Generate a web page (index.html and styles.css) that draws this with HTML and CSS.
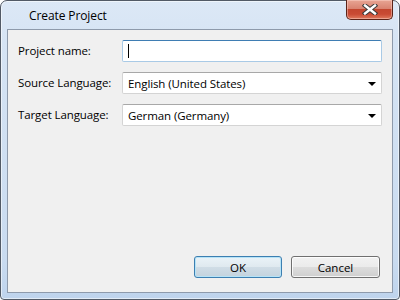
FILE: index.html
```html
<!DOCTYPE html>
<html>
<head>
<meta charset="utf-8">
<link rel="stylesheet" href="styles.css">
</head>
<body>
<div class="window">
  <div class="titlebar">
    <span class="title">Create Project</span>
    <button class="close" aria-label="Close">
      <svg width="16" height="11" viewBox="0 0 16 11">
        <path d="M3 1.5 L13 9.5 M13 1.5 L3 9.5" stroke="#3a3a3a" stroke-width="4.4" stroke-linecap="square" fill="none"/>
        <path d="M3 1.5 L13 9.5 M13 1.5 L3 9.5" stroke="#ffffff" stroke-width="2.4" stroke-linecap="square" fill="none"/>
      </svg>
    </button>
  </div>
  <div class="client">
    <div class="form">
      <label class="lbl">Project name:</label>
      <div class="input focused"><span class="caret"></span></div>
      <label class="lbl">Source Language:</label>
      <div class="combo"><span>English (United States)</span><span class="arrow"></span></div>
      <label class="lbl">Target Language:</label>
      <div class="combo"><span>German (Germany)</span><span class="arrow"></span></div>
    </div>
    <div class="buttons">
      <button class="btn default">OK</button>
      <button class="btn">Cancel</button>
    </div>
  </div>
</div>
</body>
</html>
```
FILE: styles.css
```css
* { box-sizing: border-box; }
html, body { margin: 0; padding: 0; }
body {
  width: 400px;
  height: 300px;
  font-family: "Segoe UI", "Open Sans", sans-serif;
  font-size: 11.5px;
  letter-spacing: -0.1px;
  color: #000;
  background: #ffffff;
}
.window {
  width: 400px;
  height: 300px;
  border: 1px solid #525a66;
  border-radius: 7px 7px 4px 4px;
  background: linear-gradient(to bottom, #dce8f6 0px, #d6e4f4 40px, #c9dbf0 260px, #bed3ec 300px);
  box-shadow: inset 0 0 0 1px rgba(255,255,255,0.55);
  padding: 0 6px 6px 6px;
  display: flex;
  flex-direction: column;
}
.titlebar {
  height: 28px;
  display: flex;
  align-items: flex-start;
  justify-content: space-between;
}
.title {
  margin-left: 22px;
  margin-top: 6px;
  line-height: 17px;
  font-size: 12px;
  color: #000;
}
.close {
  width: 47px;
  height: 20px;
  margin-top: -1px;
  padding: 0;
  border: 1px solid #5b2318;
  border-top: none;
  border-radius: 0 0 5px 5px;
  background: linear-gradient(to bottom, #e8a594 0%, #d98371 45%, #c3462f 50%, #c94b34 75%, #df7a5e 100%);
  box-shadow: inset 0 0 0 1px rgba(255,220,210,0.45);
  display: flex;
  align-items: center;
  justify-content: center;
}
.close svg { display: block; }
.client {
  flex: 1;
  border: 1px solid #8e9aab;
  background: #f0f0f0;
  display: flex;
  flex-direction: column;
  justify-content: space-between;
}
.form {
  display: grid;
  grid-template-columns: 104px 260px;
  grid-auto-rows: 22px;
  row-gap: 10px;
  padding: 10px 0 0 10px;
  align-items: center;
}
.lbl {
  line-height: 16px;
  white-space: nowrap;
}
.input {
  height: 22px;
  background: #fff;
  border: 1px solid #a9cae6;
  border-top-color: #3f7db3;
  border-radius: 2px;
  display: flex;
  align-items: center;
  padding-left: 5px;
}
.caret {
  width: 1px;
  height: 14px;
  background: #000;
}
.combo {
  height: 22px;
  background: #fff;
  border: 1px solid #d4d4d4;
  border-top-color: #a8a8a8;
  border-radius: 2px;
  display: flex;
  align-items: center;
  justify-content: space-between;
  padding: 0 5px 0 5px;
  white-space: nowrap;
}
.arrow {
  width: 0;
  height: 0;
  border-left: 4px solid transparent;
  border-right: 4px solid transparent;
  border-top: 4px solid #000;
  margin-top: 1px;
}
.buttons {
  display: flex;
  justify-content: flex-end;
  gap: 9px;
  padding: 0 12px 14px 0;
}
.btn {
  width: 89px;
  height: 22px;
  font-family: inherit;
  font-size: 11.5px;
  color: #000;
  padding: 0;
  border: 1px solid #707070;
  border-radius: 3px;
  background: linear-gradient(to bottom, #f2f2f2 0%, #ebebeb 50%, #dddddd 50%, #cfcfcf 100%);
  box-shadow: inset 0 0 0 1px rgba(255,255,255,0.8);
}
.btn.default {
  width: 88px;
  border-color: #3c7fb1;
  background: linear-gradient(to bottom, #eaf3f8 0%, #dfe9ef 50%, #d0dde6 50%, #c3d3de 100%);
  box-shadow: inset 0 0 0 1px #b6e3f7;
}
```
